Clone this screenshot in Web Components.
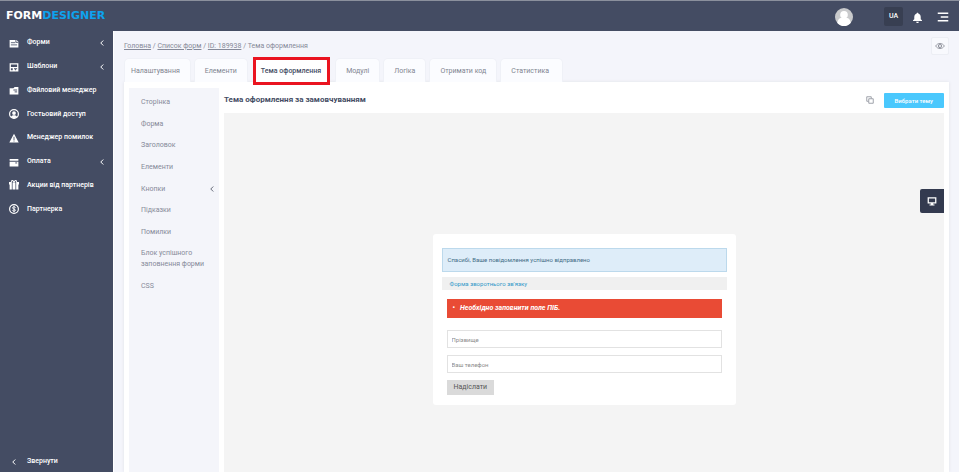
<!DOCTYPE html>
<html lang="uk">
<head>
<meta charset="utf-8">
<title>FormDesigner – Тема оформлення</title>
<style>
html, body { height: 100%; margin: 0; }
body { font: 7px/11px Roboto, "Liberation Sans", sans-serif; background: #fff; overflow: hidden; }
</style>
</head>
<body>
<fd-app></fd-app>
<script>
const ICONS = {
  forms: '<path fill="currentColor" d="M1 3h11l3 3v9H1z"/><path d="M3 7.500h7M3 11h10M11 3v4h4" fill="none" stroke="#444c63" stroke-width="1.300"/>',
  templates: '<path fill="currentColor" fill-rule="evenodd" d="M1 2h14v13H1zM3 4v4h10V4zM3 10v3h3v-3zm5 0v1.500h1.500V13H11v-1.500h2V10z"/>',
  files: '<path fill="currentColor" d="M1 5h6l2-2h6v12H1z"/><path d="M7 8h6M9 11h4" stroke="#444c63" stroke-width="1.500"/>',
  guest: '<circle cx="8" cy="8" r="7" fill="none" stroke="currentColor" stroke-width="2"/><circle cx="8" cy="6.500" r="3" fill="currentColor"/><path fill="currentColor" d="M3 13c1-4 9-4 10 0l-5 2z"/>',
  warn: '<path fill="currentColor" fill-rule="evenodd" d="M8 1l7.500 14H.5zM7.300 6v5h1.400V6zm0 6v1.500h1.400V12z"/>',
  card: '<path fill="currentColor" d="M1 3h14v3H1zM1 7.500h14V15H1z"/><path d="M10 9.500h3" stroke="#444c63" stroke-width="1.500"/>',
  gift: '<path fill="currentColor" d="M0 3h4.500v12H1V7H0zM5.700 4h4.600v11H5.700zM11.500 3H16v4h-1v8h-3.500z"/><path d="M8 4C7 0 3.500 0 4 3M8 4c1-4 4.500-4 4-1" fill="none" stroke="currentColor" stroke-width="1.700"/>',
  dollar: '<circle cx="8" cy="8" r="7" fill="none" stroke="currentColor" stroke-width="1.900"/><path d="M10.500 6C10 4 5.500 4 5.700 6.300S10.500 8 10.400 10 6 12 5.500 10M8 3v10" fill="none" stroke="currentColor" stroke-width="1.500"/>',
  left: '<path d="M10.500 3L5.500 8l5 5" fill="none" stroke="currentColor" stroke-width="2"/>',
  bell: '<path fill="currentColor" d="M8 1c1 0 1.400.6 1.400 1.400C12 3.200 12.700 5 12.700 8v2.500L14.500 12v1h-13v-1l1.800-1.500V8c0-3 .7-4.800 3.300-5.600C6.600 1.600 7 1 8 1zM6 14h4c0 2.500-4 2.500-4 0z"/>',
  menu: '<path d="M1 3h14M5 8h10M1 13h14" stroke="currentColor" stroke-width="2.200"/>',
  avatar: '<circle cx="8" cy="8" r="8" fill="#c9cacc"/><circle cx="8" cy="6" r="3.400" fill="#fff"/><path fill="#fff" d="M2 13c1-4 3-4.500 6-4.500s5 .5 6 4.500c-3 4-9 4-12 0z"/>',
  eye: '<path d="M1 8c3.500-5.500 10.500-5.500 14 0-3.500 5.500-10.500 5.500-14 0z" fill="none" stroke="currentColor" stroke-width="1.400"/><circle cx="8" cy="8" r="2.500" fill="none" stroke="currentColor" stroke-width="1.700"/>',
  copy: '<path d="M5 10.500H1.500v-9h9V5M5.500 5.500h9v9h-9z" fill="none" stroke="currentColor" stroke-width="1.600"/>',
  desktop: '<path fill="currentColor" fill-rule="evenodd" d="M1 2h14v10h-5v1.500h2V15H4v-1.500h2V12H1zm2 2v6h10V4z"/>'
};

function define(name, html, setup) {
  customElements.define(name, class extends HTMLElement {
    constructor() {
      super();
      const t = document.createElement('template');
      t.innerHTML = html;
      this.attachShadow({ mode: 'open' }).append(t.content.cloneNode(true));
    }
    connectedCallback() { if (setup) setup(this, this.shadowRoot); }
  });
}

define('fd-icon', `<style>
:host { display: inline-flex; flex: none; width: var(--size, 10px); height: var(--size, 10px); }
svg { width: 100%; height: 100%; }
</style><svg viewBox="0 0 16 16" aria-hidden="true"></svg>`, (el, root) => {
  root.querySelector('svg').innerHTML = ICONS[el.getAttribute('name')];
});

define('fd-nav-item', `<style>
:host { display: flex; flex: 1; }
a { display: flex; flex: 1; align-items: center; gap: 8px; padding: 0 7px 0 9px; color: #fff; text-decoration: none; font-weight: 500; }
span { flex: 1; }
.arrow { --size: 8px; }
:host(:not([expandable])) .arrow { display: none; }
</style><a href="#"><fd-icon class="main"></fd-icon><span><slot></slot></span><fd-icon class="arrow" name="left"></fd-icon></a>`);

define('fd-sidebar', `<style>
:host { display: flex; flex-direction: column; justify-content: space-between; background: #444c63; }
nav { display: flex; flex-direction: column; min-height: 190px; }
button { display: flex; align-items: center; gap: 9px; border: 0; background: none; color: #fff; font: inherit; font-weight: 500; padding: 5px 10px; }
fd-icon { --size: 8px; }
</style>
<nav></nav>
<button type="button"><fd-icon name="left"></fd-icon>Звернути</button>`, (el, root) => {
  const nav = root.querySelector('nav');
  for (const [icon, label, more] of [
    ['forms', 'Форми', 1], ['templates', 'Шаблони', 1], ['files', 'Файловий менеджер'],
    ['guest', 'Гостьовий доступ'], ['warn', 'Менеджер помилок'], ['card', 'Оплата', 1],
    ['gift', 'Акции від партнерів'], ['dollar', 'Партнерка']]) {
    const item = document.createElement('fd-nav-item');
    item.textContent = label;
    if (more) item.setAttribute('expandable', '');
    item.shadowRoot.querySelector('.main').setAttribute('name', icon);
    nav.append(item);
  }
});

define('fd-header', `<style>
:host { display: flex; align-items: center; justify-content: space-between; height: 30px; background: #444c63; padding: 0 10px 0 6px; color: #fff; box-sizing: border-box; }
.logo { font: bold 11px/14px "DejaVu Sans", sans-serif; color: #fff; text-decoration: none; }
.logo b { color: #0da3ee; }
.tools { display: flex; align-items: center; }
button { display: flex; align-items: center; justify-content: center; padding: 0; border: 0; background: none; color: #fff; font: 7px/11px Roboto, sans-serif; }
.user { --size: 18px; margin: 2px 31px 0 0; }
.lang { width: 19px; height: 19px; border-radius: 2px; background: #383f52; margin-right: 9px; font-weight: 500; }
.bell { --size: 11px; margin: 2px 14px 0 0; }
.menu { --size: 12px; margin-top: 2px; }
</style>
<a class="logo" href="#">FORM<b>DESIGNER</b></a>
<div class="tools">
<button type="button" class="user" aria-label="Профіль"><fd-icon name="avatar"></fd-icon></button>
<button type="button" class="lang">UA</button>
<button type="button" class="bell" aria-label="Сповіщення"><fd-icon name="bell"></fd-icon></button>
<button type="button" class="menu" aria-label="Меню"><fd-icon name="menu"></fd-icon></button>
</div>`);

define('fd-breadcrumbs', `<style>
:host { display: flex; align-items: center; justify-content: space-between; color: #868a99; }
a { color: inherit; }
button { display: flex; align-items: center; justify-content: center; width: 18px; height: 18px; padding: 0; border: 1px solid #eceef4; border-radius: 2px; background: #f8f9fd; color: #8f929c; --size: 10px; }
</style>
<nav><a href="#">Головна</a> / <a href="#">Список форм</a> / <a href="#">ID: 189938</a> / Тема оформлення</nav>
<button type="button" aria-label="Перегляд"><fd-icon name="eye"></fd-icon></button>`);

define('fd-tab', `<style>
:host { display: block; position: relative; }
a { display: block; padding: 7px 10px 5px; background: #fbfcff; border: 1px solid #eff1f7; border-bottom: 0; border-radius: 5px 5px 0 0; color: #7f8490; text-decoration: none; }
:host([active]) a { padding-inline: 6px; background: #fff; color: #444c63; font-weight: 500; }
:host(:first-child) a { padding-left: 6px; }
:host(:last-child) a { padding-right: 13px; }
:host([active])::after { content: ""; position: absolute; inset: -1px -2px -3px -1px; border: 3px solid #ea1420; }
</style><a href="#"><slot></slot></a>`);

define('fd-submenu', `<style>
:host { display: block; width: 90px; background: #f4f5fa; color: #868a99; box-sizing: border-box; padding: 9px 6px 0 12px; }
nav { display: flex; flex-direction: column; justify-content: space-between; min-height: 195px; }
a { display: flex; align-items: center; justify-content: space-between; color: inherit; text-decoration: none; }
fd-icon { --size: 8px; color: #666b7a; margin-right: -3px; }
</style>
<nav><a href="#">Сторінка</a><a href="#">Форма</a><a href="#">Заголовок</a><a href="#">Елементи</a><a href="#">Кнопки<fd-icon name="left"></fd-icon></a><a href="#">Підказки</a><a href="#">Помилки</a><a href="#">Блок успішного<br>заповнення форми</a><a href="#">CSS</a></nav>`);

define('fd-form-card', `<style>
:host { display: block; box-sizing: border-box; width: 303px; padding: 14px 9px 10px; border-radius: 3px; background: #fff; font-size: 6px; }
form { display: flex; flex-direction: column; padding: 0 5px; align-items: stretch; }
.ok { padding: 5px; line-height: 12px; background: #deedf9; border: 1px solid #bcd9ec; color: #3f6c85; }
h2 { margin: 5px 0 9px; padding: 1px 8px; background: #f0f0f0; color: #3199c9; font: inherit; }
ul { margin: 0 0 12px; padding: 4px 6px; background: #e94b35; color: #fff; font-size: 7px; font-weight: bold; font-style: italic; list-style: none; }
li { display: flex; gap: 5px; }
li::before { content: "•"; font-style: normal; }
input { box-sizing: border-box; width: 100%; height: 18px; margin: 0 0 7px; padding: 0 4px; border: 1px solid #e2e2e2; background: #fff; font: inherit; }
input::placeholder { color: #8c8c8c; opacity: 1; }
button { align-self: flex-start; padding: 2px 7px; border: 0; background: #dadada; color: #555; font: inherit; font-size: 7px; }
</style>
<div class="ok" role="status">Спасибі, Ваше повідомлення успішно відправлено</div>
<h2>Форма зворотнього зв'язку</h2>
<form>
<ul><li>Необхідно заповнити поле ПІБ.</li></ul>
<input type="text" placeholder="Прізвище" aria-label="Прізвище">
<input type="tel" placeholder="Ваш телефон" aria-label="Ваш телефон">
<button type="button">Надіслати</button>
</form>`);

define('fd-theme', `<style>
:host { display: flex; flex-direction: column; flex: 1; min-width: 0; }
header { display: flex; align-items: center; gap: 10px; min-height: 26px; }
h1 { flex: 1; margin: 0; font-size: 8px; line-height: 12px; font-weight: 700; color: #444c63; }
button { display: flex; align-items: center; justify-content: center; padding: 0; border: 0; background: none; font: inherit; color: #8a8e98; --size: 8px; }
.pick { padding: 2px 11px; background: #4ac8fd; color: #fff; border-radius: 1px; font-size: 6px; font-weight: 500; }
.preview { position: relative; flex: 1; display: flex; justify-content: center; align-items: flex-start; padding-top: 121px; background: #f4f4f4; }
.device { position: absolute; right: 0; top: 76px; width: 24px; height: 24px; background: #333a4f; color: #fff; border-radius: 2px 0 0 2px; --size: 10px; }
</style>
<header><h1>Тема оформлення за замовчуванням</h1>
<button type="button" aria-label="Копіювати"><fd-icon name="copy"></fd-icon></button>
<button type="button" class="pick">Вибрати тему</button></header>
<div class="preview"><fd-form-card></fd-form-card>
<button type="button" class="device" aria-label="Екран"><fd-icon name="desktop"></fd-icon></button></div>`);

define('fd-app', `<style>
:host { display: grid; grid-template: auto 1fr / 113px 1fr; height: 100%; box-sizing: border-box; border-top: 1px solid #8b909d; border-right: 1px solid #fff; }
fd-header { grid-column: 1 / -1; }
main { display: flex; flex-direction: column; min-width: 0; padding: 6px 10px 0 10px; background: #f4f5fb; border-left: 1px solid #fff; }
.tabs { display: flex; gap: 3px; padding-top: 3px; position: relative; z-index: 1; }
.tabs fd-tab[active] { margin: 0 4px 0 3px; }
.panel { flex: 1; display: flex; gap: 5px; padding: 6px 5px 0; background: #fff; box-shadow: 0 0 3px #dfe1e8; }
fd-theme { margin-top: -1px; }
</style>
<fd-header></fd-header>
<fd-sidebar></fd-sidebar>
<main>
<fd-breadcrumbs></fd-breadcrumbs>
<nav class="tabs"><fd-tab>Налаштування</fd-tab><fd-tab>Елементи</fd-tab><fd-tab active>Тема оформлення</fd-tab><fd-tab>Модулі</fd-tab><fd-tab>Логіка</fd-tab><fd-tab>Отримати код</fd-tab><fd-tab>Статистика</fd-tab></nav>
<div class="panel"><fd-submenu></fd-submenu><fd-theme></fd-theme></div>
</main>`);
</script>
</body>
</html>
